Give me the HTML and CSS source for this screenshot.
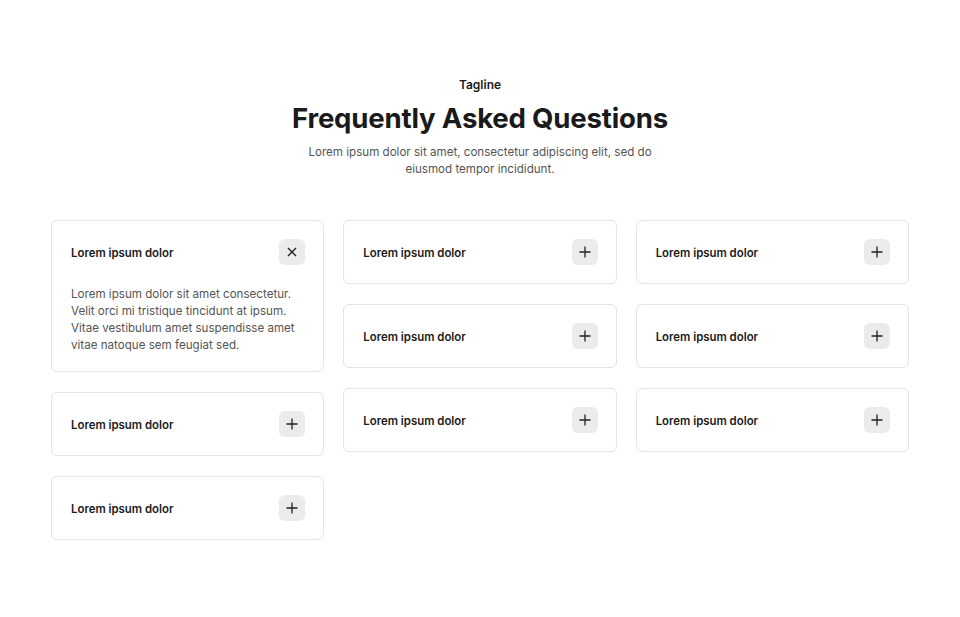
FILE: index.html
```html
<!DOCTYPE html>
<html lang="en">
<head>
<meta charset="utf-8">
<title>FAQ</title>
<link rel="stylesheet" href="styles.css">
</head>
<body>
<section class="faq">
  <header class="faq-head">
    <p class="tagline">Tagline</p>
    <h1 class="title">Frequently Asked Questions</h1>
    <p class="lead">Lorem ipsum dolor sit amet, consectetur adipiscing elit, sed do eiusmod tempor incididunt.</p>
  </header>
  <div class="grid">
    <div class="col">
      <div class="card">
        <div class="card-head">
          <span class="q">Lorem ipsum dolor</span>
          <span class="btn"><svg viewBox="0 0 16 16" width="16" height="16"><path d="M4 4L12 12M12 4L4 12" stroke="#222" stroke-width="1.4" fill="none"/></svg></span>
        </div>
        <p class="answer">Lorem ipsum dolor sit amet consectetur. Velit orci mi tristique tincidunt at ipsum. Vitae vestibulum amet suspendisse amet vitae natoque sem feugiat sed.</p>
      </div>
      <div class="card"><div class="card-head"><span class="q">Lorem ipsum dolor</span><span class="btn"><svg viewBox="0 0 16 16" width="16" height="16"><path d="M8 2.5V13.5M2.5 8H13.5" stroke="#222" stroke-width="1.3" fill="none"/></svg></span></div></div>
      <div class="card"><div class="card-head"><span class="q">Lorem ipsum dolor</span><span class="btn"><svg viewBox="0 0 16 16" width="16" height="16"><path d="M8 2.5V13.5M2.5 8H13.5" stroke="#222" stroke-width="1.3" fill="none"/></svg></span></div></div>
    </div>
    <div class="col">
      <div class="card"><div class="card-head"><span class="q">Lorem ipsum dolor</span><span class="btn"><svg viewBox="0 0 16 16" width="16" height="16"><path d="M8 2.5V13.5M2.5 8H13.5" stroke="#222" stroke-width="1.3" fill="none"/></svg></span></div></div>
      <div class="card"><div class="card-head"><span class="q">Lorem ipsum dolor</span><span class="btn"><svg viewBox="0 0 16 16" width="16" height="16"><path d="M8 2.5V13.5M2.5 8H13.5" stroke="#222" stroke-width="1.3" fill="none"/></svg></span></div></div>
      <div class="card"><div class="card-head"><span class="q">Lorem ipsum dolor</span><span class="btn"><svg viewBox="0 0 16 16" width="16" height="16"><path d="M8 2.5V13.5M2.5 8H13.5" stroke="#222" stroke-width="1.3" fill="none"/></svg></span></div></div>
    </div>
    <div class="col">
      <div class="card"><div class="card-head"><span class="q">Lorem ipsum dolor</span><span class="btn"><svg viewBox="0 0 16 16" width="16" height="16"><path d="M8 2.5V13.5M2.5 8H13.5" stroke="#222" stroke-width="1.3" fill="none"/></svg></span></div></div>
      <div class="card"><div class="card-head"><span class="q">Lorem ipsum dolor</span><span class="btn"><svg viewBox="0 0 16 16" width="16" height="16"><path d="M8 2.5V13.5M2.5 8H13.5" stroke="#222" stroke-width="1.3" fill="none"/></svg></span></div></div>
      <div class="card"><div class="card-head"><span class="q">Lorem ipsum dolor</span><span class="btn"><svg viewBox="0 0 16 16" width="16" height="16"><path d="M8 2.5V13.5M2.5 8H13.5" stroke="#222" stroke-width="1.3" fill="none"/></svg></span></div></div>
    </div>
  </div>
</section>
</body>
</html>
```

FILE: styles.css
```css
* { box-sizing: border-box; }
html, body { margin: 0; padding: 0; background: #fff; }
body {
  font-family: Inter, "Noto Sans", sans-serif;
  color: #1a1a1a;
}
.faq {
  padding: 77px 51px 40px;
}
.faq-head {
  display: flex;
  flex-direction: column;
  align-items: center;
  text-align: center;
}
.tagline {
  margin: 0;
  font-size: 12px;
  font-weight: 600;
  line-height: 16px;
}
.title {
  margin: 8px 0 0;
  font-size: 27.6px;
  font-weight: 700;
  line-height: 34px;
  letter-spacing: -0.2px;
}
.lead {
  margin: 9px 0 0;
  width: 360px;
  font-size: 11.6px;
  line-height: 17px;
  color: #555;
}
.grid {
  margin-top: 42px;
  display: grid;
  grid-template-columns: repeat(3, 1fr);
  column-gap: 19px;
  align-items: start;
}
.col {
  display: flex;
  flex-direction: column;
  gap: 20px;
}
.card {
  border: 1px solid #e3e3e3;
  border-radius: 6px;
  padding: 18px;
  background: #fff;
}
.card-head {
  display: flex;
  align-items: center;
  justify-content: space-between;
}
.q {
  font-size: 11.4px;
  font-weight: 600;
  line-height: 16px;
  padding: 1px 0 0 1px;
}
.btn {
  width: 26px;
  height: 26px;
  border-radius: 6px;
  background: #ebebeb;
  display: flex;
  align-items: center;
  justify-content: center;
}
.answer {
  margin: 21px 0 -1px;
  font-size: 11.6px;
  line-height: 17px;
  color: #555;
  padding-left: 1px;
}
```
